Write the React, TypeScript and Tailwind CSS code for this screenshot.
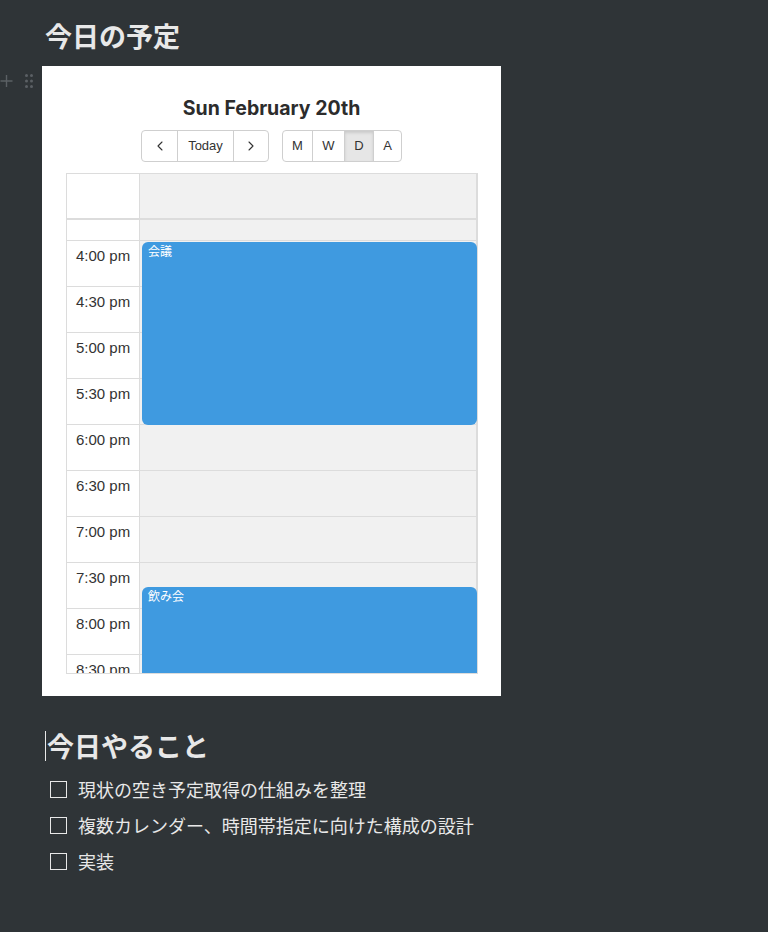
import { ChevronLeft, ChevronRight } from "lucide-react";

const slots = [
  "4:00 pm",
  "4:30 pm",
  "5:00 pm",
  "5:30 pm",
  "6:00 pm",
  "6:30 pm",
  "7:00 pm",
  "7:30 pm",
  "8:00 pm",
  "8:30 pm",
];

const events = [
  { title: "会議", top: "top-[68px]", height: "h-[183px]" },
  { title: "飲み会", top: "top-[413px]", height: "h-[120px]" },
];

const todos = [
  "現状の空き予定取得の仕組みを整理",
  "複数カレンダー、時間帯指定に向けた構成の設計",
  "実装",
];

const jp = { fontFamily: '"Noto Sans CJK JP", "Noto Sans", sans-serif' };

function Toolbar() {
  return (
    <div className="flex justify-center gap-[13px] mt-[10px]" style={{ fontFamily: '"Liberation Sans", Arial, sans-serif' }}>
      <div className="flex h-[32px] border border-[#cfcfcf] rounded-[4px] overflow-hidden text-[#333] text-[13px]">
        <button className="w-[36px] flex items-center justify-center border-r border-[#cfcfcf]">
          <ChevronLeft size={16} strokeWidth={1.6} />
        </button>
        <button className="w-[56px] flex items-center justify-center border-r border-[#cfcfcf]">Today</button>
        <button className="w-[34px] flex items-center justify-center">
          <ChevronRight size={16} strokeWidth={1.6} />
        </button>
      </div>
      <div className="flex h-[32px] border border-[#cfcfcf] rounded-[4px] overflow-hidden text-[#333] text-[13px]">
        <button className="w-[30px] flex items-center justify-center border-r border-[#cfcfcf]">M</button>
        <button className="w-[32px] flex items-center justify-center border-r border-[#cfcfcf]">W</button>
        <button className="w-[29px] flex items-center justify-center border-r border-[#cfcfcf] bg-[#e6e6e6] shadow-[inset_0_2px_3px_rgba(0,0,0,0.12)]">D</button>
        <button className="w-[27px] flex items-center justify-center">A</button>
      </div>
    </div>
  );
}

function DayGrid() {
  return (
    <div
      className="relative mt-[11px] ml-[24px] w-[412px] h-[501px] overflow-hidden border border-[#dcdcdc]"
      style={{ fontFamily: '"Liberation Sans", Arial, sans-serif' }}
    >
      <div className="flex h-[46px] border-b-2 border-[#dcdcdc]">
        <div className="w-[73px] bg-white border-r border-[#dcdcdc]" />
        <div className="flex-1 bg-[#f1f1f1] border-r border-[#dcdcdc]" />
      </div>
      <div className="flex h-[21px] border-b border-[#dcdcdc]">
        <div className="w-[73px] bg-white border-r border-[#dcdcdc]" />
        <div className="flex-1 bg-[#f1f1f1] border-r border-[#dcdcdc]" />
      </div>
      {slots.map((s) => (
        <div key={s} className="flex h-[46px] border-b border-[#dcdcdc]">
          <div className="w-[73px] bg-white border-r border-[#dcdcdc] pl-[9px] pt-[5px] text-[15px] leading-[20px] text-[#333]">
            {s}
          </div>
          <div className="flex-1 bg-[#f1f1f1] border-r border-[#dcdcdc]" />
        </div>
      ))}
      {events.map((e) => (
        <div
          key={e.title}
          className={`absolute left-[75px] w-[335px] ${e.top} ${e.height} bg-[#3f9ae0] rounded-[6px] text-white text-[12px] leading-[16px] px-[6px] pt-[1px]`}
          style={jp}
        >
          {e.title}
        </div>
      ))}
    </div>
  );
}

export default function App() {
  return (
    <div className="relative min-h-[932px] bg-[#2f3437] text-[#e8e8e8] pl-[45px] pt-[18px]" style={jp}>
      <div className="absolute left-0 top-[73px] flex items-center gap-[11px] text-[#5b6064]">
        <svg width="13" height="14" viewBox="0 0 13 14">
          <path d="M6.5 1v12M0.5 7h12" stroke="currentColor" strokeWidth="1.4" />
        </svg>
        <svg width="10" height="16" viewBox="0 0 10 16" fill="currentColor">
          <circle cx="2.5" cy="2.5" r="1.5" />
          <circle cx="7.5" cy="2.5" r="1.5" />
          <circle cx="2.5" cy="8" r="1.5" />
          <circle cx="7.5" cy="8" r="1.5" />
          <circle cx="2.5" cy="13.5" r="1.5" />
          <circle cx="7.5" cy="13.5" r="1.5" />
        </svg>
      </div>

      <h1 className="text-[27px] font-bold leading-[36px]">今日の予定</h1>

      <div className="mt-[12px] -ml-[3px] w-[459px] h-[630px] bg-white pt-[30px]">
        <h2
          className="text-center text-[19.5px] font-bold leading-[24px] text-[#2c2c2c]"
          style={{ fontFamily: "Inter, sans-serif" }}
        >
          Sun February 20th
        </h2>
        <Toolbar />
        <DayGrid />
      </div>

      <div className="mt-[34px] flex items-center h-[32px]">
        <span className="w-px h-[30px] bg-[#e8e8e8] mr-[1px]" />
        <h1 className="text-[27px] font-bold leading-[32px]">今日やること</h1>
      </div>

      <ul className="mt-[9px] ml-[5px]">
        {todos.map((t) => (
          <li key={t} className="flex items-center h-[36px] text-[18px]">
            <span className="w-[17px] h-[17px] border-[1.5px] border-[#e8e8e8] mr-[11px]" />
            {t}
          </li>
        ))}
      </ul>
    </div>
  );
}
